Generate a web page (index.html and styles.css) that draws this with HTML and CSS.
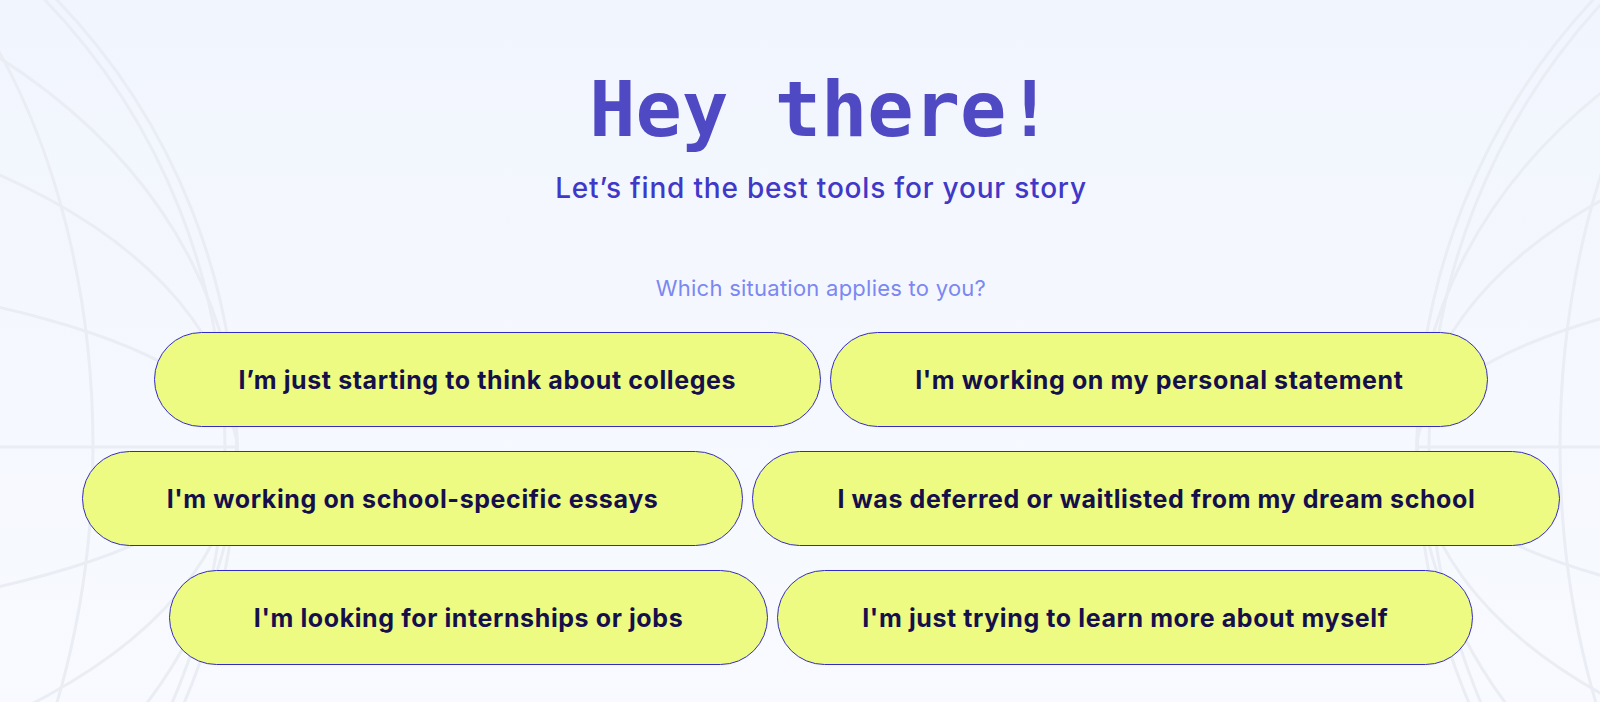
FILE: index.html
```html
<!DOCTYPE html>
<html lang="en">
<head>
<meta charset="utf-8">
<title>Hey there!</title>
<link rel="stylesheet" href="styles.css">
</head>
<body>
<svg class="backdrop" width="1600" height="702" viewBox="0 0 1600 702" aria-hidden="true">
  <g class="globe" fill="none">
    <circle cx="-408" cy="447" r="645"/>
    <circle cx="-420" cy="447" r="645"/>
    <ellipse cx="-408" cy="447" rx="645" ry="502"/>
    <ellipse cx="-408" cy="447" rx="645" ry="351"/>
    <ellipse cx="-408" cy="447" rx="645" ry="180"/>
    <line x1="0" y1="447" x2="237" y2="447"/>
    <ellipse cx="-286" cy="447" rx="379" ry="600"/>
  </g>
  <g class="globe" fill="none">
    <circle cx="2073" cy="447" r="656"/>
    <circle cx="2085" cy="447" r="656"/>
    <ellipse cx="2073" cy="447" rx="656" ry="510"/>
    <ellipse cx="2073" cy="447" rx="656" ry="355"/>
    <ellipse cx="2073" cy="447" rx="656" ry="185"/>
    <line x1="1417" y1="447" x2="1600" y2="447"/>
    <ellipse cx="1950" cy="447" rx="390" ry="610"/>
  </g>
</svg>
<main class="intro">
  <h1 class="title">Hey there!</h1>
  <p class="subtitle">Let’s find the best tools for your story</p>
  <p class="question">Which situation applies to you?</p>
  <div class="choices">
    <button class="choice" type="button">I’m just starting to think about colleges</button>
    <button class="choice" type="button">I'm working on my personal statement</button>
    <button class="choice" type="button">I'm working on school-specific essays</button>
    <button class="choice" type="button">I was deferred or waitlisted from my dream school</button>
    <button class="choice" type="button">I'm looking for internships or jobs</button>
    <button class="choice" type="button">I'm just trying to learn more about myself</button>
  </div>
</main>
</body>
</html>
```

FILE: styles.css
```css
html, body {
  margin: 0;
  padding: 0;
}

body {
  width: 1600px;
  height: 702px;
  overflow: hidden;
  position: relative;
  background: linear-gradient(180deg, #f1f5fd 0%, #f5f8fe 55%, #f8faff 100%);
  font-family: "Inter", "Noto Sans", sans-serif;
}

.backdrop {
  position: absolute;
  left: 0;
  top: 0;
  z-index: 0;
}

.globe ellipse,
.globe circle,
.globe line {
  stroke: #eaedf3;
  stroke-width: 3;
}

.intro {
  position: relative;
  z-index: 1;
  box-sizing: border-box;
  padding: 71px 0 0 42px;
  display: flex;
  flex-direction: column;
  align-items: center;
  text-align: center;
}

.title {
  margin: 0;
  font-family: "DejaVu Sans Mono", "Liberation Mono", monospace;
  font-weight: 700;
  font-size: 77px;
  line-height: 77px;
  color: #4f4ac4;
  letter-spacing: 0;
}

.subtitle {
  margin: 23px 0 0;
  font-size: 28px;
  line-height: 34px;
  font-weight: 500;
  letter-spacing: 0.8px;
  color: #4038c8;
}

.question {
  margin: 70px 0 0;
  font-size: 22px;
  line-height: 27px;
  font-weight: 400;
  letter-spacing: 0.25px;
  color: #7b87f2;
}

.choices {
  margin-top: 30px;
  width: 1500px;
  display: flex;
  flex-wrap: wrap;
  justify-content: center;
  gap: 24px 9px;
}

.choice {
  box-sizing: border-box;
  height: 95px;
  padding: 0 84px;
  border: 1px solid #332cc4;
  border-radius: 48px;
  background: #edfb82;
  color: #15104c;
  font-family: "Inter", "Noto Sans", sans-serif;
  font-weight: 700;
  font-size: 25px;
  line-height: 30px;
  letter-spacing: 0.6px;
  white-space: nowrap;
  cursor: pointer;
}
```
